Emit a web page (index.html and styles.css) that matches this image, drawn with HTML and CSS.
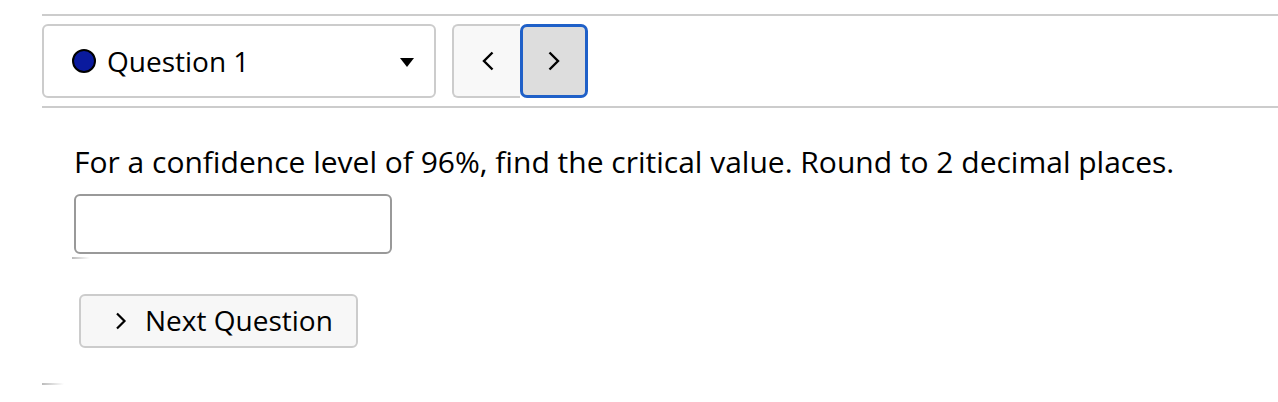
FILE: index.html
```html
<!DOCTYPE html>
<html>
<head>
<meta charset="utf-8">
<link rel="stylesheet" href="styles.css">
</head>
<body>
<div class="page">
  <div class="nav">
    <div class="select">
      <span class="dot"></span>
      <span class="select-label">Question 1</span>
      <svg class="caret" width="14" height="10" viewBox="0 0 14 10"><path d="M0 1 L14 1 L7 10 Z" fill="#000"/></svg>
    </div>
    <div class="pager">
      <button class="pg prev"><svg width="14" height="20" viewBox="0 0 14 20"><path d="M11.5 1.5 L3 10 L11.5 18.5" fill="none" stroke="#000" stroke-width="2.4"/></svg></button>
      <button class="pg next"><svg width="14" height="20" viewBox="0 0 14 20"><path d="M2.5 1.5 L11 10 L2.5 18.5" fill="none" stroke="#000" stroke-width="2.4"/></svg></button>
    </div>
  </div>
  <div class="content">
    <p class="question">For a confidence level of 96%, find the critical value. Round to 2 decimal places.</p>
    <input class="answer" type="text">
    <div class="shade shade-a"></div>
    <button class="next-q"><svg width="12" height="18" viewBox="0 0 12 18"><path d="M2 1.5 L9.5 9 L2 16.5" fill="none" stroke="#000" stroke-width="2.2"/></svg><span>Next Question</span></button>
    <div class="shade shade-b"></div>
  </div>
</div>
</body>
</html>
```
FILE: styles.css
```css
html, body { margin: 0; padding: 0; background: #fff; }
body { font-family: "Open Sans", "Liberation Sans", sans-serif; color: #000; }
.page { padding: 14px 0 0 42px; }
.nav {
  border-top: 2px solid #cccccc;
  border-bottom: 2px solid #cccccc;
  padding: 8px 0 8px 0;
  display: flex;
  align-items: center;
  gap: 16px;
}
.select {
  box-sizing: border-box;
  width: 394px;
  height: 74px;
  border: 2px solid #cccccc;
  border-radius: 6px;
  display: flex;
  align-items: center;
  padding: 0 20px 0 28px;
}
.dot {
  width: 20px; height: 20px;
  border: 2px solid #000;
  border-radius: 50%;
  background: #0a1a9e;
  flex: none;
}
.select-label { font-size: 28px; margin-left: 11px; flex: 1; line-height: 1; padding-bottom: 1px; }
.caret { flex: none; margin-top: 2px; }
.pager { display: flex; }
.pg {
  box-sizing: border-box;
  width: 68px; height: 74px;
  display: flex; align-items: center; justify-content: center;
  padding: 0;
  font: inherit;
}
.prev {
  background: #f8f8f8;
  border: 2px solid #cccccc;
  border-right: none;
  border-radius: 6px 0 0 6px;
  padding-left: 2px;
}
.next {
  background: #dddddd;
  border: 3px solid #1f60c8;
  border-radius: 7px;
}
.content { padding: 34px 0 0 32px; display: flex; flex-direction: column; align-items: flex-start; }
.question { margin: 0; font-size: 30px; line-height: 40px; }
.answer {
  box-sizing: border-box;
  margin-top: 12px;
  width: 318px; height: 60px;
  border: 2px solid #999999;
  border-radius: 6px;
  background: #fff;
  font: inherit;
}
.shade { height: 2px; background: linear-gradient(90deg, #bbb, #fff); }
.shade-a { width: 18px; margin: 3px 0 0 -2px; }
.next-q {
  box-sizing: border-box;
  margin: 35px 0 0 5px;
  width: 279px; height: 54px;
  background: #f7f7f7;
  border: 2px solid #cccccc;
  border-radius: 6px;
  display: flex; align-items: center; gap: 18px;
  padding: 0 0 0 34px;
  font-family: inherit; font-size: 28px; color: #000;
}
.next-q span { padding-bottom: 2px; }
.shade-b { width: 22px; margin: 35px 0 0 -32px; }
```
